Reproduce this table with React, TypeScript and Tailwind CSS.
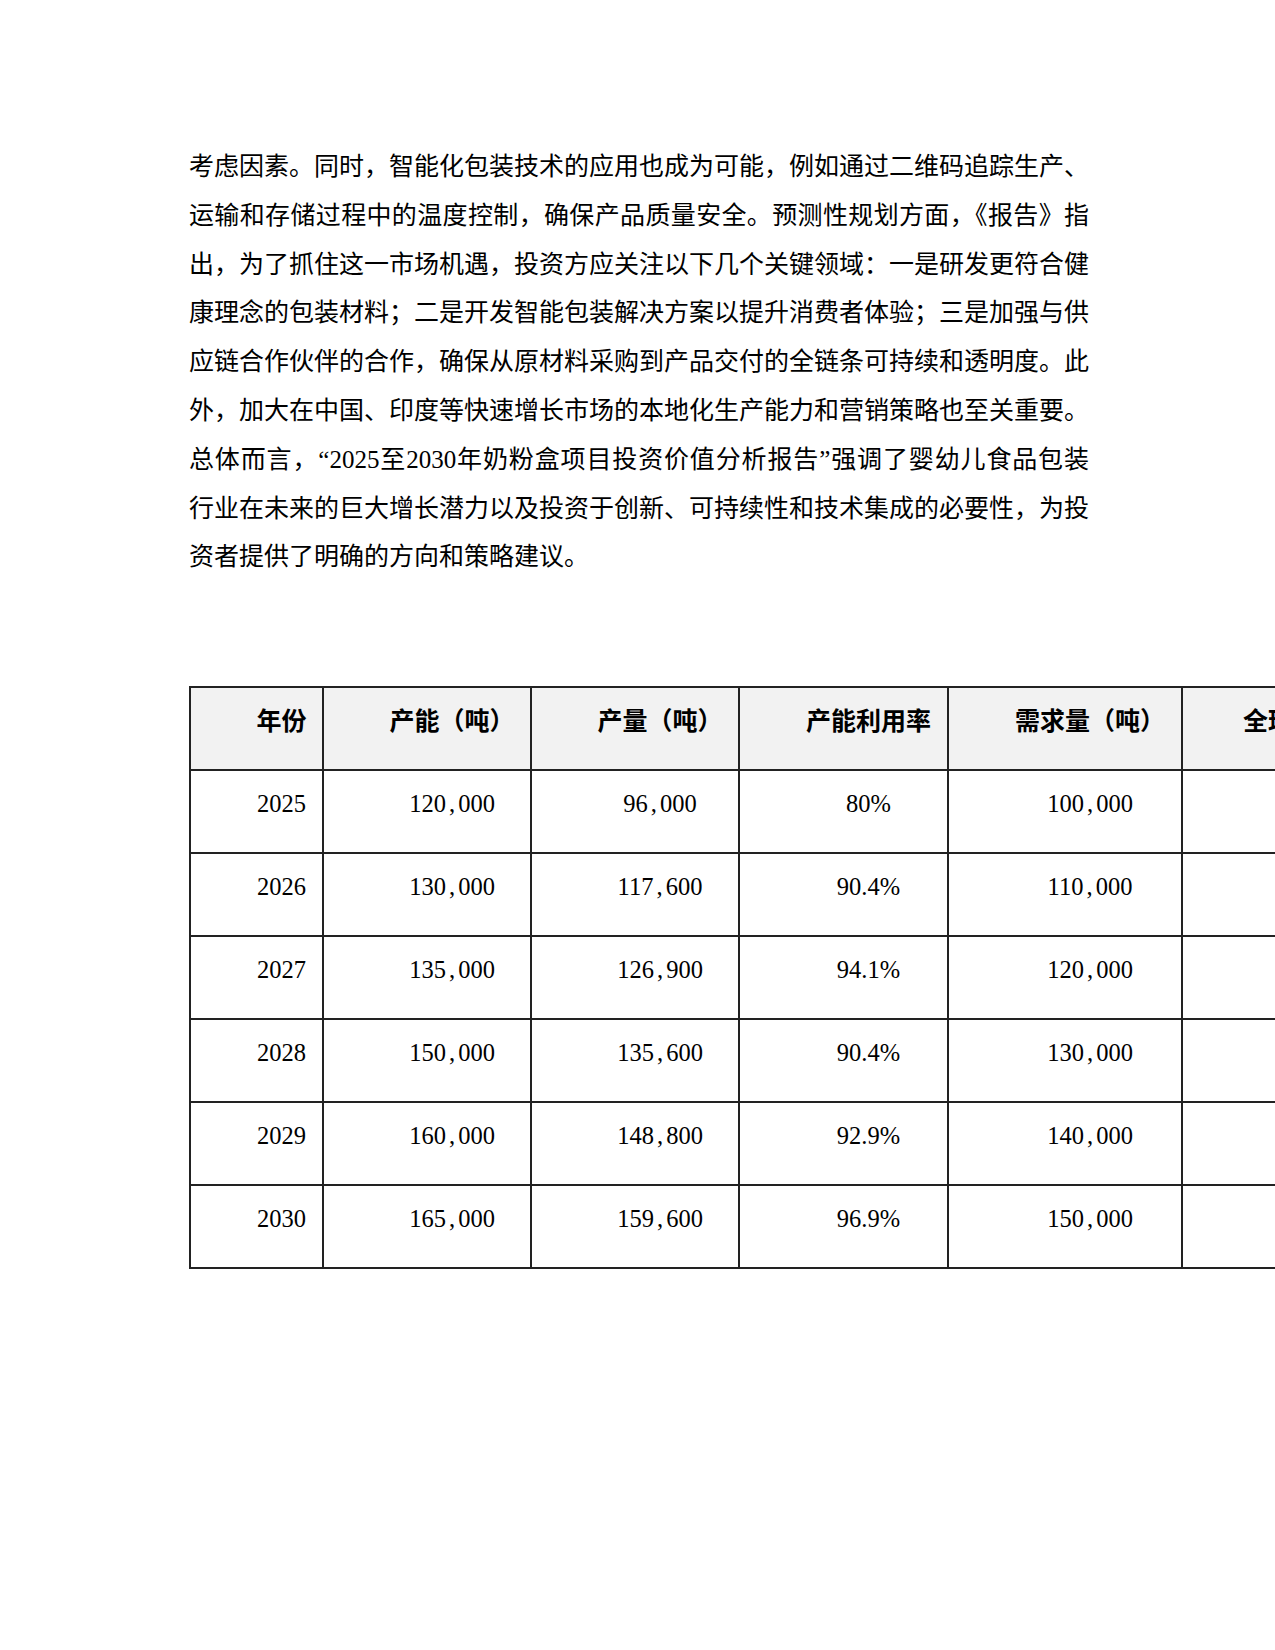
import React from "react"

const lines = [
  "考虑因素。同时，智能化包装技术的应用也成为可能，例如通过二维码追踪生产、",
  "运输和存储过程中的温度控制，确保产品质量安全。预测性规划方面，《报告》指",
  "出，为了抓住这一市场机遇，投资方应关注以下几个关键领域：一是研发更符合健",
  "康理念的包装材料；二是开发智能包装解决方案以提升消费者体验；三是加强与供",
  "应链合作伙伴的合作，确保从原材料采购到产品交付的全链条可持续和透明度。此",
  "外，加大在中国、印度等快速增长市场的本地化生产能力和营销策略也至关重要。",
  "总体而言，“2025至2030年奶粉盒项目投资价值分析报告”强调了婴幼儿食品包装",
  "行业在未来的巨大增长潜力以及投资于创新、可持续性和技术集成的必要性，为投",
  "资者提供了明确的方向和策略建议。",
]

const headers = ["年份", "产能（吨）", "产量（吨）", "产能利用率", "需求量（吨）", "全球占比（%）"]

const rows = [
  ["2025", "120,000", "96,000", "80%", "100,000", "35%"],
  ["2026", "130,000", "117,600", "90.4%", "110,000", "37%"],
  ["2027", "135,000", "126,900", "94.1%", "120,000", "39%"],
  ["2028", "150,000", "135,600", "90.4%", "130,000", "41%"],
  ["2029", "160,000", "148,800", "92.9%", "140,000", "43%"],
  ["2030", "165,000", "159,600", "96.9%", "150,000", "45%"],
]

const widths = ["w-[133px]", "w-[208px]", "w-[208px]", "w-[209px]", "w-[234px]", "w-[246px]"]

// SimSun-style number: the comma keeps a half-width cell
function Num({ value }: { value: string }) {
  const parts = value.split(",")
  return (
    <>
      {parts.map((p, i) => (
        <React.Fragment key={i}>
          {i > 0 && <span className="inline-block w-[0.5em]">,</span>}
          {p}
        </React.Fragment>
      ))}
    </>
  )
}

export default function App() {
  return (
    <div className="min-h-[1650px] w-full overflow-hidden bg-white text-black">
      <div className="pl-[189px] pt-[143px]">
        <div
          lang="zh-CN"
          className="w-[900px] text-[25px] leading-[48.8px] font-['Liberation_Serif','Noto_Sans_CJK_SC',serif]"
        >
          {lines.map((line, i) => (
            <div
              key={i}
              className={
                i < lines.length - 1
                  ? "whitespace-nowrap text-justify [text-align-last:justify]"
                  : "whitespace-nowrap text-left"
              }
            >
              {line}
            </div>
          ))}
        </div>

        <table className="mt-[104px] w-[1238px] table-fixed border-collapse">
          <colgroup>
            {widths.map((w, i) => (
              <col key={i} className={w} />
            ))}
          </colgroup>
          <thead>
            <tr className="h-[83px] bg-[#f2f2f2]">
              {headers.map((h, i) => (
                <th
                  key={i}
                  className="border-2 border-[#222] pl-[50px] pt-[19px] align-top text-center text-[25px] leading-[25px] font-bold whitespace-nowrap font-['Noto_Sans_CJK_SC',sans-serif]"
                >
                  {h}
                </th>
              ))}
            </tr>
          </thead>
          <tbody>
            {rows.map((r, ri) => (
              <tr key={ri} className="h-[83px]">
                {r.map((c, ci) => (
                  <td
                    key={ci}
                    className="border-2 border-[#222] pl-[50px] pt-[20px] align-top text-center text-[24.5px] leading-[25px] whitespace-nowrap font-['Liberation_Serif','Noto_Sans_CJK_SC',serif]"
                  >
                    <Num value={c} />
                  </td>
                ))}
              </tr>
            ))}
          </tbody>
        </table>
      </div>
    </div>
  )
}
